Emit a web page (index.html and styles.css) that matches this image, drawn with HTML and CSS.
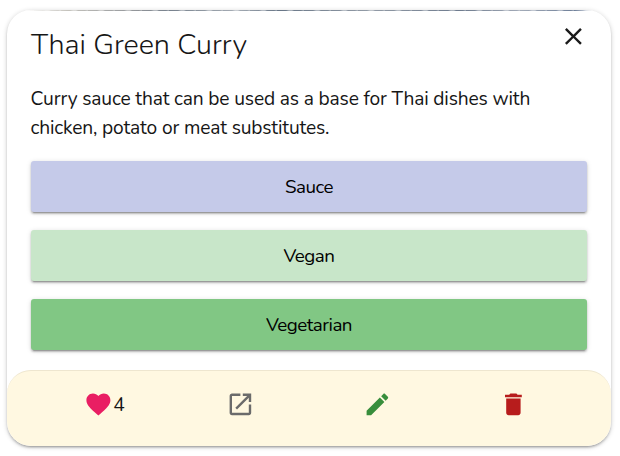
FILE: index.html
```html
<!DOCTYPE html>
<html lang="en">
<head>
<meta charset="utf-8">
<title>Thai Green Curry</title>
<link rel="stylesheet" href="styles.css">
</head>
<body>
<article class="card">
  <div class="photo-edge"></div>
  <div class="content">
    <header class="header">
      <h1 class="title">Thai Green Curry</h1>
      <button class="close" aria-label="Close"><svg class="icon" viewBox="0 0 24 24"><path d="M19 6.41L17.59 5 12 10.59 6.41 5 5 6.41 10.59 12 5 17.59 6.41 19 12 13.41 17.59 19 19 17.59 13.41 12z"/></svg></button>
    </header>
    <p class="description">Curry sauce that can be used as a base for Thai dishes with<br>chicken, potato or meat substitutes.</p>
    <div class="tags">
      <div class="tag sauce">Sauce</div>
      <div class="tag vegan">Vegan</div>
      <div class="tag vegetarian">Vegetarian</div>
    </div>
  </div>
  <footer class="actions">
    <div class="action like"><svg class="icon" viewBox="0 0 24 24"><path d="M12 21.35l-1.45-1.32C5.4 15.36 2 12.28 2 8.5 2 5.42 4.42 3 7.5 3c1.74 0 3.41.81 4.5 2.09C13.09 3.81 14.76 3 16.5 3 19.58 3 22 5.42 22 8.5c0 3.78-3.4 6.86-8.55 11.54L12 21.35z"/></svg><span class="count">4</span></div>
    <div class="action open"><svg class="icon" viewBox="0 0 24 24"><path d="M19 19H5V5h7V3H5c-1.11 0-2 .9-2 2v14c0 1.1.89 2 2 2h14c1.1 0 2-.9 2-2v-7h-2v7zM14 3v2h3.59l-9.83 9.83 1.41 1.41L19 6.41V10h2V3h-7z"/></svg></div>
    <div class="action edit"><svg class="icon" viewBox="0 0 24 24"><path d="M3 17.25V21h3.75L17.81 9.94l-3.75-3.75L3 17.25zM20.71 7.04c.39-.39.39-1.02 0-1.41l-2.34-2.34c-.39-.39-1.02-.39-1.41 0l-1.83 1.83 3.75 3.75 1.83-1.83z"/></svg></div>
    <div class="action delete"><svg class="icon" viewBox="0 0 24 24"><path d="M6 19c0 1.1.9 2 2 2h8c1.1 0 2-.9 2-2V7H6v12zM19 4h-3.5l-1-1h-5l-1 1H5v2h14V4z"/></svg></div>
  </footer>
</article>
</body>
</html>
```
FILE: styles.css
```css
* { box-sizing: border-box; }
body {
  margin: 0;
  padding: 10px 9px 10px 7px;
  background: #fff;
  color: #161616;
  font-family: Nunito, Lato, sans-serif;
  font-size: 19.2px;
}
.card {
  display: flex;
  flex-direction: column;
  height: 436px;
  border-radius: 24px;
  overflow: hidden;
  background: #fff;
  box-shadow: 0 2px 2px rgba(0, 0, 0, .14), 0 3px 1px -2px rgba(0, 0, 0, .12), 0 1px 5px rgba(0, 0, 0, .2);
}
.photo-edge {
  height: 1px;
  flex: none;
  background:
    repeating-linear-gradient(90deg, transparent 0 9px, rgba(255, 255, 255, .4) 12px 15px, transparent 17px 24px, rgba(255, 255, 255, .25) 26px 27px),
    linear-gradient(90deg, #fff 3%, #c5c3bd 10%, #8f9398 22%, #78828e 27%, #a6adb5 38%, #687687 45%, #939ca7 60%, #6e7b8e 75%, #a3abb8 85%, #6e7f99 94%, #fff 97%);
}
.content {
  height: 359px;
  padding: 0 24px;
}
.header {
  display: flex;
  justify-content: space-between;
  height: 74px;
}
.title {
  margin: 12px 0 0;
  font-size: 28.8px;
  line-height: 44px;
  font-weight: 300;
  letter-spacing: -.03px;
  white-space: nowrap;
}
.close {
  width: 29px;
  height: 29px;
  margin: 11px -.6px 0 0;
  padding: 0;
  border: 0;
  background: none;
}
.icon {
  display: block;
  flex: none;
  width: 28.8px;
  height: 28.8px;
  fill: currentColor;
}
.close .icon { color: #1b1b1b; }
.description {
  margin: 0 0 0 -.5px;
  line-height: 29px;
  letter-spacing: -.15px;
  white-space: nowrap;
}
.tags {
  display: grid;
  grid-template-rows: repeat(3, 51px);
  gap: 18px;
  margin-top: 18.4px;
}
.tag {
  display: flex;
  align-items: center;
  justify-content: center;
  border-radius: 3px;
  color: #000;
  font-size: 18.8px;
  letter-spacing: -.5px;
  box-shadow: 0 2px 2px rgba(0, 0, 0, .2), 0 3px 1px -2px rgba(0, 0, 0, .2), 0 1px 5px rgba(0, 0, 0, .15);
}
.sauce { background: #c5cae9; }
.vegan { background: #c8e6c9; }
.vegetarian { background: #81c784; }
.actions {
  display: grid;
  grid-template-columns: repeat(4, 1fr);
  height: 76px;
  padding: 19px 29px 0;
  border-top: 1px solid #eee6cf;
  border-radius: 24px;
  background: #fff8e1;
}
.action {
  display: flex;
  align-items: flex-start;
  justify-content: center;
}
.count {
  line-height: 30px;
  letter-spacing: -.5px;
}
.like .icon { color: #e91e63; }
.open .icon { color: #6b6b6b; }
.edit .icon { color: #388e3c; }
.delete .icon { color: #b71c1c; }
```
